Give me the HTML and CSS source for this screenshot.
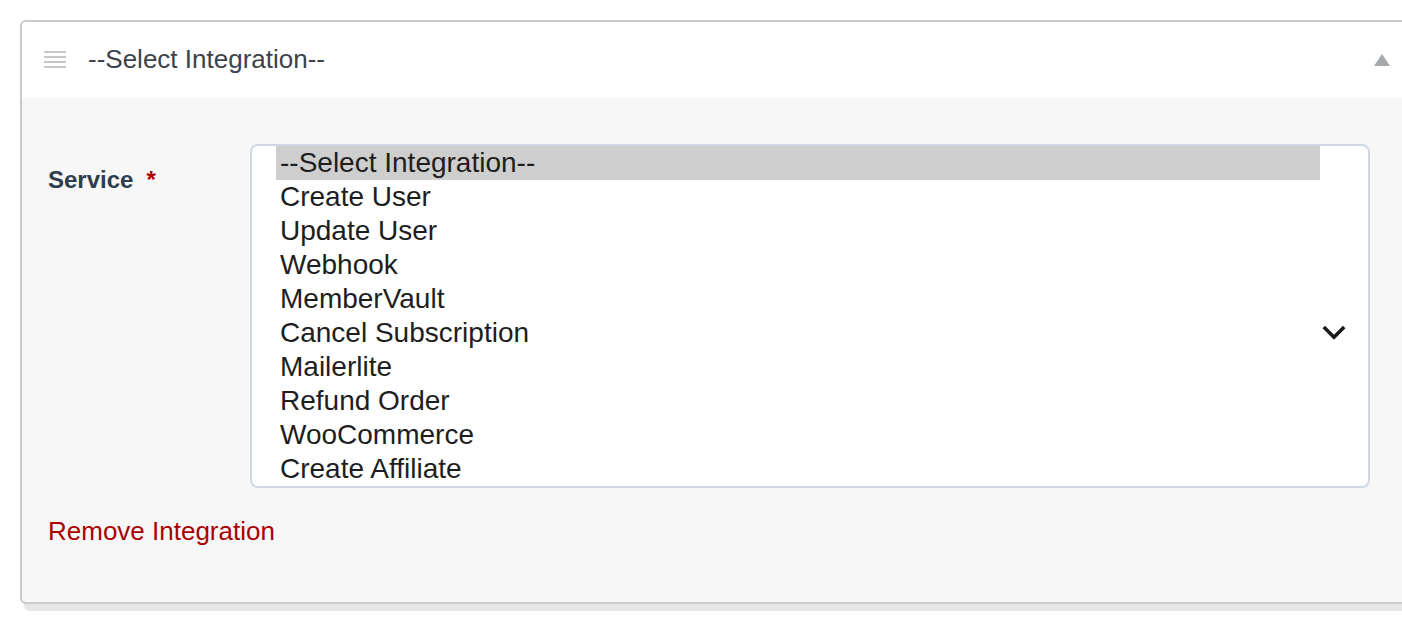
FILE: index.html
```html
<!DOCTYPE html>
<html lang="en">
<head>
<meta charset="utf-8">
<title>Integration</title>
<link rel="stylesheet" href="styles.css">
</head>
<body>
<div class="card">
  <div class="card-header">
    <svg class="drag-handle" width="22" height="18" viewBox="0 0 22 18" aria-hidden="true">
      <rect x="0" y="1" width="22" height="2" fill="#c5c6c8"/>
      <rect x="0" y="6" width="22" height="2" fill="#c5c6c8"/>
      <rect x="0" y="11" width="22" height="2" fill="#c5c6c8"/>
      <rect x="0" y="16" width="22" height="2" fill="#c5c6c8"/>
    </svg>
    <span class="card-title">--Select Integration--</span>
    <svg class="toggle" width="16" height="12" viewBox="0 0 16 12" aria-hidden="true">
      <polygon points="8,0 16,12 0,12" fill="#a7aaad"/>
    </svg>
  </div>
  <div class="card-body">
    <div class="field-row">
      <label class="field-label">Service<span class="required">*</span></label>
      <div class="listbox" role="listbox">
        <div class="option selected">--Select Integration--</div>
        <div class="option">Create User</div>
        <div class="option">Update User</div>
        <div class="option">Webhook</div>
        <div class="option">MemberVault</div>
        <div class="option">Cancel Subscription</div>
        <div class="option">Mailerlite</div>
        <div class="option">Refund Order</div>
        <div class="option">WooCommerce</div>
        <div class="option">Create Affiliate</div>
        <svg class="chevron" width="24" height="16" viewBox="0 0 24 16" aria-hidden="true">
          <polyline points="1.8,3 12,13.2 22.2,3" fill="none" stroke="#1a1a1a" stroke-width="3.6"/>
        </svg>
      </div>
    </div>
    <a class="remove-link" href="#">Remove Integration</a>
  </div>
</div>
</body>
</html>
```

FILE: styles.css
```css
html {
  overflow: hidden;
}

html, body {
  margin: 0;
  padding: 0;
  background: #ffffff;
}

body {
  font-family: "Liberation Sans", Arial, sans-serif;
  padding: 20px 0 20px 20px;
}

.card {
  box-sizing: border-box;
  width: 1394px;
  border: 2px solid #cacaca;
  border-radius: 6px;
  background: #f7f7f7;
  box-shadow: 4px 7px 0 #e6e6e6;
  overflow: hidden;
}

.card-header {
  display: flex;
  align-items: center;
  height: 76px;
  padding: 0 22px 0 22px;
  background: #ffffff;
}

.drag-handle {
  flex: none;
  margin-top: -2px;
}

.card-title {
  margin-left: 22px;
  margin-top: -3px;
  font-size: 26px;
  color: #3c434a;
  line-height: 30px;
}

.toggle {
  flex: none;
  margin-left: auto;
  margin-top: 0;
}

.card-body {
  padding: 46px 0 56px 26px;
}

.field-row {
  display: flex;
  align-items: flex-start;
}

.field-label {
  width: 202px;
  flex: none;
  margin-top: 22px;
  font-size: 24px;
  line-height: 28px;
  font-weight: bold;
  color: #2c3e50;
}

.required {
  color: #aa0000;
  margin-left: 13px;
}

.listbox {
  position: relative;
  box-sizing: border-box;
  width: 1120px;
  height: 344px;
  padding: 0 48px 0 24px;
  border: 2px solid #cfd8e2;
  border-radius: 8px;
  background: #ffffff;
}

.option {
  height: 34px;
  line-height: 34px;
  padding-left: 4px;
  font-size: 28px;
  color: #1e1e1e;
  white-space: nowrap;
}

.option.selected {
  background: #cecece;
}

.chevron {
  position: absolute;
  right: 22px;
  top: 178px;
}

.remove-link {
  display: block;
  width: max-content;
  margin-top: 28px;
  font-size: 26px;
  line-height: 30px;
  color: #aa0000;
  text-decoration: none;
}
```
